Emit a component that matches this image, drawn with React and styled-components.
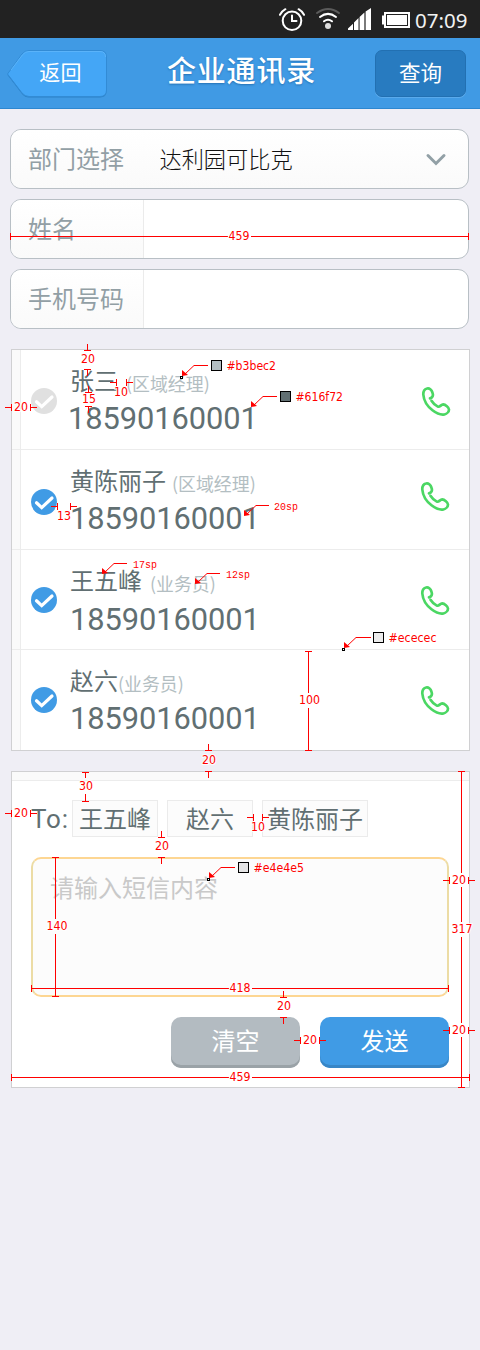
import React from "react";
import styled, { createGlobalStyle } from "styled-components";

const GlobalStyle = createGlobalStyle`
  *, *::before, *::after { box-sizing: border-box; }
  body { margin: 0; background: #efeef5; }
`;

const cjk = `"Noto Sans CJK SC", sans-serif`;

const Screen = styled.div`
  position: relative;
  width: 480px;
  height: 1350px;
  overflow: hidden;
  background: #efeef5;
  font-family: ${cjk};
`;

const StatusBar = styled.div`
  display: flex;
  justify-content: flex-end;
  height: 38px;
  padding-right: 12px;
  background: #222;
`;

const StatusIcons = styled.svg`
  width: 136px;
  height: 38px;
`;

const Clock = styled.span`
  width: 53px;
  color: #f2f2f2;
  font: 20.5px/40px "Noto Sans", sans-serif;
  white-space: nowrap;
`;

const Header = styled.header`
  display: flex;
  align-items: flex-start;
  justify-content: space-between;
  height: 71px;
  padding: 12px 14px 0 7px;
  background: #409ae4;
  border-bottom: 1px solid #2d87d0;
`;

const BackButton = styled.button`
  position: relative;
  width: 100px;
  height: 47px;
  padding: 0 0 4px 7px;
  border: 0;
  background: none;
  color: #fff;
  font: 21px/43px ${cjk};
  letter-spacing: 0.3px;
`;

const BackShape = styled.svg`
  position: absolute;
  inset: 0;
`;

const ButtonText = styled.span`
  position: relative;
`;

const Title = styled.h1`
  margin: 0 -1px 0 0;
  color: #fff;
  font: 500 29px/38px ${cjk};
  letter-spacing: 0.8px;
  text-shadow: 0 1px 2px #2472b5;
`;

const QueryButton = styled.button`
  width: 91px;
  height: 47px;
  padding: 0 0 3px;
  border: 1px solid #2270b2;
  border-radius: 7px;
  background: #287bc0;
  box-shadow: 0 1px 0 #5aaaec;
  color: #fff;
  font: 21.5px/42px ${cjk};
`;

const Form = styled.div`
  display: flex;
  flex-direction: column;
  gap: 10px;
  padding: 20px 11px 0 10px;
`;

const Field = styled.div`
  display: flex;
  height: 60px;
  border: 1px solid #b8bfc5;
  border-radius: 11px;
  overflow: hidden;
  background: ${(p) => (p.$select ? "linear-gradient(#fff, #fafafa)" : "#fff")};
`;

const FieldLabel = styled.label`
  width: 133px;
  padding-left: 17px;
  border-right: 1px solid ${(p) => (p.$plain ? "transparent" : "#ebebeb")};
  background: linear-gradient(#fff, #fafafa);
  color: #929fa5;
  font-size: 24px;
  line-height: 56px;
`;

const FieldValue = styled.span`
  flex: 1;
  padding-left: 15.5px;
  color: #111;
  font-size: 22.2px;
  font-weight: 300;
  line-height: 57px;
`;

const Chevron = styled.svg`
  width: 22px;
  height: 16px;
  margin: 21px 21px 0 0;
`;

const Card = styled.section`
  margin: 20px 10px 0 11px;
  border: 1px solid #d0d0d2;
  background: #fff;
`;

const ContactRow = styled.div`
  display: flex;
  height: 100px;
  border-bottom: 1px solid #ececec;
  &:last-child { border-bottom: 0; }
`;

const Gutter = styled.div`
  width: 9px;
  background: #fafafa;
  border-right: 1px solid #ececec;
`;

const CheckIcon = styled.svg`
  width: 26px;
  height: 26px;
  margin: ${(p) => p.$top}px 0 0 10px;
`;

const ContactInfo = styled.div`
  flex: 1;
  padding-left: 13px;
  white-space: nowrap;
`;

const NameLine = styled.div`
  display: flex;
  gap: ${(p) => p.$gap}px;
  height: 46px;
  color: #616f72;
`;

const Name = styled.span`
  font-size: 24px;
  line-height: 59px;
`;

const Role = styled.span`
  color: #b3bec2;
  font-size: 17.9px;
  line-height: 67px;
`;

const Phone = styled.div`
  margin: ${(p) => p.$top}px 0 0 ${(p) => p.$left}px;
  color: #616f72;
  font: 30.8px/36px Roboto, sans-serif;
  letter-spacing: -0.07px;
`;

const CallIcon = styled.svg`
  width: 30px;
  height: 32px;
  margin: ${(p) => p.$top}px ${(p) => p.$right}px 0 0;
`;

const TopStrip = styled.div`
  height: 9px;
  background: #fafafa;
  border-bottom: 1px solid #ececec;
`;

const Recipients = styled.div`
  display: flex;
  gap: 9px;
  height: 37px;
  margin: 19px 0 20px 19px;
`;

const ToLabel = styled.span`
  width: 32px;
  color: #616f72;
  font: 26px/39px Roboto, sans-serif;
  letter-spacing: 0.8px;
`;

const Chip = styled.span`
  width: ${(p) => p.$width}px;
  border: 1px solid #ebebeb;
  background: #fcfcfc;
  color: #616f72;
  font-size: 24px;
  line-height: 34px;
  text-align: center;
  white-space: nowrap;
`;

const MessageBox = styled.div`
  height: 140px;
  margin: 0 20px 20px 19px;
  padding-left: 17px;
  border: 2px solid;
  border-color: #fdd692 #ecdca5;
  border-radius: 10px;
  background: #fcfcfc;
  color: #c9c9c9;
  font-size: 24px;
  line-height: 56px;
`;

const Actions = styled.div`
  display: flex;
  justify-content: flex-end;
  gap: 20px;
  padding: 0 20px 19px 0;
`;

const ActionButton = styled.button`
  width: 129px;
  height: 51px;
  padding: 0 0 5px;
  border: 0;
  border-radius: 10px;
  background: ${(p) => (p.$primary ? "#409be5" : "#b3bbc1")};
  box-shadow: inset 0 -3px 0 ${(p) => (p.$primary ? "#3886c6" : "#9aa2a7")};
  color: #fff;
  font: 24px/46px ${cjk};
`;

const Annotations = styled.svg`
  position: absolute;
  inset: 0;
  pointer-events: none;
`;

const Mark = styled.path`
  fill: none;
  stroke: #f00;
  stroke-width: 1;
  shape-rendering: crispEdges;
`;

const MarkLabel = styled.text`
  fill: #f00;
  font: ${(p) => (p.$serif ? '11px "Liberation Mono", monospace' : '12.5px "DejaVu Sans Condensed", "DejaVu Sans", sans-serif')};
  paint-order: stroke;
  stroke: ${(p) => (p.$halo ? "rgba(255,255,255,.85)" : "none")};
  stroke-width: 2px;
`;

const contacts = [
  { name: "张三", role: "区域经理", gap: 8, left: -2, phoneTop: 5, check: 38, call: 35, right: 18, off: true },
  { name: "黄陈丽子", role: "区域经理", gap: 6, left: 0, phoneTop: 5, check: 39, call: 30, right: 19 },
  { name: "王五峰", role: "业务员", gap: 8, left: 0, phoneTop: 6, check: 37, call: 34, right: 19 },
  { name: "赵六", role: "业务员", gap: -1, left: 0, phoneTop: 5, check: 37, call: 34, right: 19 },
];

/* Horizontal and vertical rulers: start, end, cross position, label centre */
const rulersX = [
  [10, 468, 236, 239],
  [31, 448, 988, 240],
  [11, 469, 1077, 240],
];
const rulersY = [
  [651, 750, 308],
  [857, 996, 55],
];
/* Gap marks: two facing end caps, with stems pointing outwards */
const gapsX = [
  [11, 30, 407], [116, 126, 382], [57, 70, 506], [11, 30, 813],
  [253, 262, 817], [449, 468, 880], [300, 319, 1040], [449, 468, 1030],
];
const gapsY = [
  [350, 369, 87], [392, 406, 88], [750, 771, 208],
  [837, 857, 161], [997, 1017, 283],
];
const labels = [
  ["459", 239, 236], ["20", 21, 407], ["20", 88, 359], ["10", 121, 392],
  ["15", 89, 399], ["13", 64, 516], ["100", 309.5, 700], ["20", 209, 760],
  ["30", 86, 786], ["20", 21, 813], ["20", 162, 846], ["10", 258, 827],
  ["140", 57, 926], ["20", 459, 880], ["317", 462, 929], ["418", 240, 988],
  ["20", 284, 1006], ["20", 310, 1040], ["20", 459, 1030], ["459", 240, 1077],
];
/* Callouts: text, text x, text width, leader start x, elbow y, tip x, swatch */
const callouts = [
  { text: "#b3bec2", x: 226.5, w: 49.5, sx: 208, y: 365, tip: 182, color: "#b3bec2", sq: 211, dot: true },
  { text: "#616f72", x: 295.5, w: 47.5, sx: 277, y: 396, tip: 251, color: "#616f72", sq: 280 },
  { text: "20sp", x: 274, w: 24, sx: 269, y: 505, tip: 244 },
  { text: "17sp", x: 133, w: 24, sx: 127, y: 563, tip: 102 },
  { text: "12sp", x: 226, w: 24, sx: 220, y: 573, tip: 195 },
  { text: "#ececec", x: 388.5, w: 48, sx: 371, y: 637, tip: 344, color: "#ececec", sq: 373, dot: true },
  { text: "#e4e4e5", x: 253.5, w: 50.5, sx: 235, y: 867, tip: 209, color: "#e4e4e5", sq: 238, dot: true },
];

function Check({ off, top }) {
  return (
    <CheckIcon $top={top} viewBox="0 0 26 26">
      <circle cx="13" cy="13" r="13" fill={off ? "#e0e0e0" : "#409be5"} />
      <path d="M5.5 13.8 10.7 18.6 21 9" fill="none" stroke="#fff" strokeWidth="3.2" strokeLinecap="round" />
    </CheckIcon>
  );
}

function Call({ top, right }) {
  return (
    <CallIcon $top={top} $right={right} viewBox="0 0 30 32">
      <path
        d="M9 13.4C11.5 12.8 12.5 10.5 11.6 8C10.6 4.6 8.3 2.8 6 3.5C3.2 4.2 2.2 6.5 2.3 9.5C2.8 15.5 6.3 21.3 11.5 25.3C15 28 20 30.2 23.4 29.5C26 28.9 28 26.4 28 24.4C28 22.4 24.3 19.5 22.2 19.4C20 19.4 19 22.5 16.8 21.6C14.5 20.5 12.3 18.7 10.5 15.8"
        fill="none"
        stroke="#4bd763"
        strokeWidth="2.7"
        strokeLinecap="round"
        strokeLinejoin="round"
      />
    </CallIcon>
  );
}

function Ruler({ a, b, at, cut = [], vertical }) {
  const stops = [a, ...cut.flat(), b];
  let d = "";
  for (let i = 0; i < stops.length; i += 2) {
    d += vertical
      ? `M${at + 0.5} ${stops[i]}V${stops[i + 1]}`
      : `M${stops[i]} ${at + 0.5}H${stops[i + 1]}`;
  }
  for (const s of [a, b]) {
    d += vertical ? `M${at - 3} ${s + 0.5}h7` : `M${s + 0.5} ${at - 3}v7`;
  }
  return <Mark d={d} />;
}

function Gap({ a, b, at, vertical }) {
  const d = vertical
    ? `M${at + 0.5} ${a - 6}V${a}M${at - 3} ${a + 0.5}h7M${at + 0.5} ${b}v7M${at - 3} ${b + 0.5}h7`
    : `M${a - 6} ${at + 0.5}H${a}M${a + 0.5} ${at - 3}v7M${b} ${at + 0.5}h7M${b + 0.5} ${at - 3}v7`;
  return <Mark d={d} />;
}

function Callout({ text, x, w, sx, y, tip, color, sq, dot }) {
  const ty = y + 11;
  return (
    <g>
      <path d={`M${sx} ${y + 0.5}H${tip + 12}L${tip + 2} ${ty - 1}`} fill="none" stroke="#f00" />
      <path d={`M${tip} ${ty}v-6l6 5z`} fill="#f00" />
      {dot && <rect x={tip - 1.5} y={ty + 0.5} width="2" height="2" fill="#fff" stroke="#000" />}
      {color && <rect x={sq + 0.5} y={y - 4.5} width="10" height="10" fill={color} stroke="#000" />}
      <MarkLabel $serif={!color} x={x} y={y + 5} textLength={w} lengthAdjust="spacingAndGlyphs">
        {text}
      </MarkLabel>
    </g>
  );
}

export default function App() {
  return (
    <Screen>
      <GlobalStyle />
      <StatusBar>
        <StatusIcons viewBox="279 0 136 38">
          <g fill="none" stroke="#fff" strokeWidth="2" strokeLinecap="round">
            <circle cx="292" cy="20.8" r="9.3" />
            <path d="M292 15.5V21h4.5M280 14.8q2-3.8 5.4-5.6M304 14.8q-2-3.8-5.4-5.6" />
            <path d="M317 13q11-8 22 0" stroke="#5b5b5b" />
            <path d="M320 17q8-6.2 16 0M324 21.3q4-3.2 8 0" />
          </g>
          <circle cx="328" cy="26" r="3" fill="#ddd" />
          <path d="M348 30v-1.5l5-4.8V30zM354 30v-7.4l4.5-4.5V30zM359.6 30V17l4.8-4.6V30zM365.6 30V11.5L371 8v22z" fill="#fff" />
          <path d="M382 15.5h2V12h26v16h-26v-3.5h-2z" fill="#fff" />
          <rect x="386.5" y="14.5" width="21" height="11" fill="#fff" stroke="#222" />
        </StatusIcons>
        <Clock>07:09</Clock>
      </StatusBar>

      <Header>
        <BackButton>
          <BackShape width="100" height="48" viewBox="0 0 100 48">
            <path d="M0.5 25 15 5Q18 1.5 22 1.5H93Q99.5 1.5 99.5 8V41Q99.5 47.5 93 47.5H22Q18 47.5 15 44Z" fill="#2b80c5" />
            <path d="M0.5 24 15 4Q18 .5 22 .5H93Q99.5 .5 99.5 7V40Q99.5 46.5 93 46.5H22Q18 46.5 15 43Z" fill="#44a6f6" stroke="#328bd5" />
            <path d="M4 20 15.5 4.8Q18 1.5 22 1.5H93Q98.5 1.5 98.5 7" fill="none" stroke="#5ab3fa" />
          </BackShape>
          <ButtonText>返回</ButtonText>
        </BackButton>
        <Title>企业通讯录</Title>
        <QueryButton>查询</QueryButton>
      </Header>

      <Form>
        <Field $select>
          <FieldLabel $plain>部门选择</FieldLabel>
          <FieldValue>达利园可比克</FieldValue>
          <Chevron viewBox="0 0 22 16">
            <path d="M3 4.5 11 12.5 19 4.5" fill="none" stroke="#92a0a6" strokeWidth="3" strokeLinecap="round" />
          </Chevron>
        </Field>
        <Field><FieldLabel>姓名</FieldLabel></Field>
        <Field><FieldLabel>手机号码</FieldLabel></Field>
      </Form>

      <Card>
        {contacts.map((c) => (
          <ContactRow key={c.name}>
            <Gutter />
            <Check off={c.off} top={c.check} />
            <ContactInfo>
              <NameLine $gap={c.gap}>
                <Name>{c.name}</Name>
                <Role>({c.role})</Role>
              </NameLine>
              <Phone $top={c.phoneTop} $left={c.left}>18590160001</Phone>
            </ContactInfo>
            <Call top={c.call} right={c.right} />
          </ContactRow>
        ))}
      </Card>

      <Card>
        <TopStrip />
        <Recipients>
          <ToLabel>To:</ToLabel>
          <Chip $width={86}>王五峰</Chip>
          <Chip $width={86}>赵六</Chip>
          <Chip $width={106}>黄陈丽子</Chip>
        </Recipients>
        <MessageBox>请输入短信内容</MessageBox>
        <Actions>
          <ActionButton>清空</ActionButton>
          <ActionButton $primary>发送</ActionButton>
        </Actions>
      </Card>

      <Annotations width="480" height="1350">
        {rulersX.map(([a, b, at, c]) => (
          <Ruler key={at} a={a} b={b} at={at} cut={[[c - 11, c + 12]]} />
        ))}
        {rulersY.map(([a, b, at]) => {
          const m = (a + b) / 2;
          return <Ruler key={at} vertical a={a} b={b} at={at} cut={[[m - 7.5, m + 7.5]]} />;
        })}
        <Ruler vertical a={771} b={1087} at={461} cut={[[873, 887], [922, 937], [1023, 1037]]} />
        {gapsX.map(([a, b, at]) => <Gap key={a + "-" + at} a={a} b={b} at={at} />)}
        {gapsY.map(([a, b, at]) => <Gap key={at} vertical a={a} b={b} at={at} />)}
        <Mark d="M82 772.5h7M85.5 772v6M85.5 794v7M82 801.5h7" />
        {labels.map(([t, x, y]) => (
          <MarkLabel key={t + x + y} $halo x={x - t.length * 3.5} y={y + 4} textLength={t.length * 7} lengthAdjust="spacingAndGlyphs">
            {t}
          </MarkLabel>
        ))}
        {callouts.map((c) => <Callout key={c.text} {...c} />)}
      </Annotations>
    </Screen>
  );
}
